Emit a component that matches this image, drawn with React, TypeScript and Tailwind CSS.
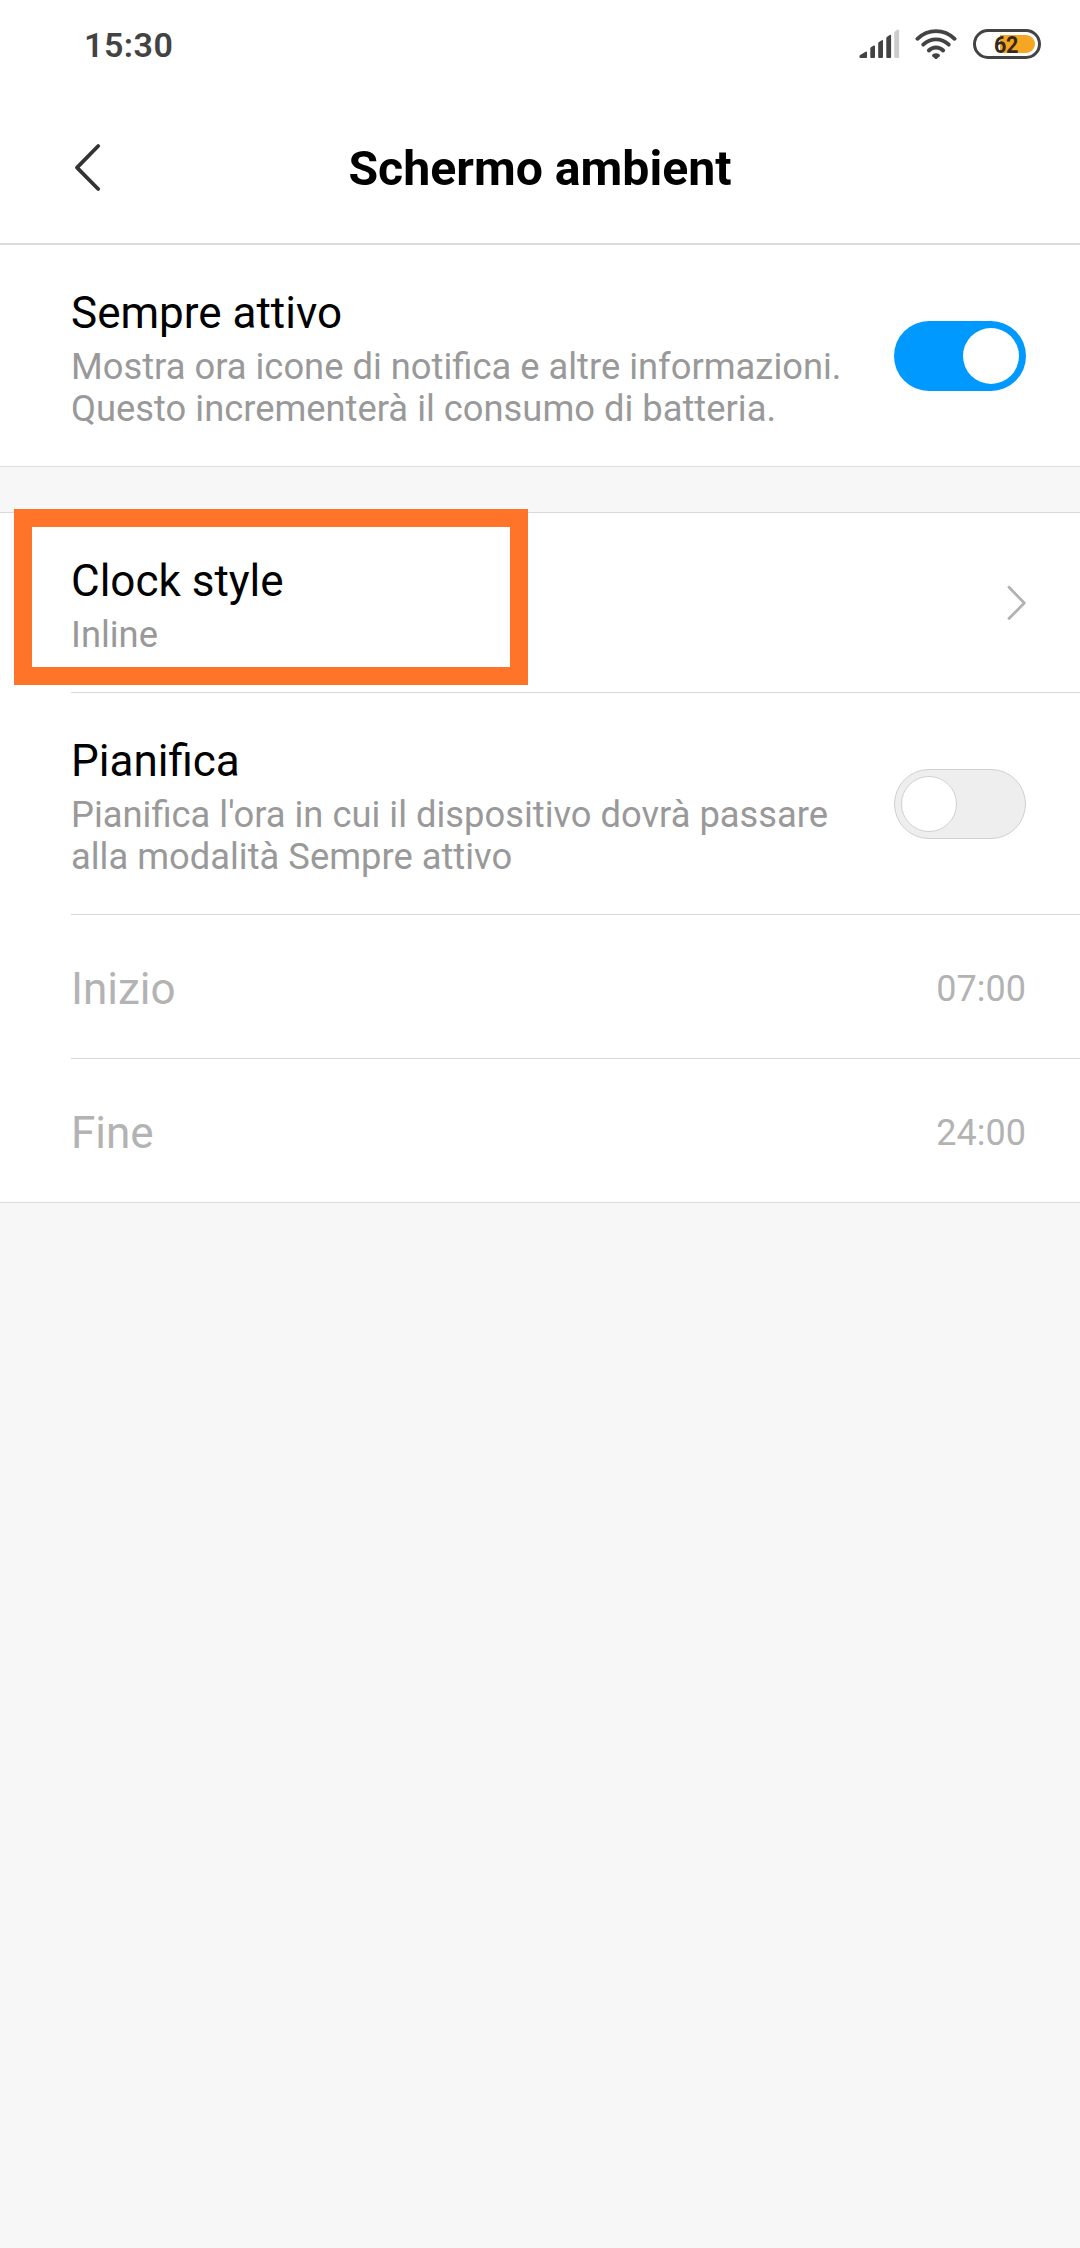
import type { ReactNode } from "react";

function SignalIcon() {
  return (
    <svg width="42" height="30" viewBox="0 0 42 30" fill="#434343">
      <path d="M0.5 27.2Q0.5 26.4 1.2 26L6.6 22.7Q8 22 8 23.5V28.2Q8 29 7 29H1.4Q0.5 29 0.5 28.2Z" />
      <path d="M11.3 19.5Q11.3 18.5 12.2 18L14.8 16.6Q16 16.2 16 17.4V28Q16 29 15 29H12.3Q11.3 29 11.3 28Z" />
      <path d="M19.2 14.4Q19.2 13.5 20 13L22.7 11.2Q24 10.6 24 12V28Q24 29 23 29H20.2Q19.2 29 19.2 28Z" />
      <path d="M27.3 9.3Q27.3 8.3 28.1 7.8L30.8 5.9Q32.1 5.2 32.1 6.6V28Q32.1 29 31.1 29H28.3Q27.3 29 27.3 28Z" />
      <path fill="#cccccc" d="M35.2 4Q35.2 3 36 2.5L38.8 0.6Q40.1 0 40.1 1.3V28Q40.1 29 39.1 29H36.2Q35.2 29 35.2 28Z" />
    </svg>
  );
}

function WifiIcon() {
  return (
    <svg width="42" height="31" viewBox="0 0 42 31" fill="none" stroke="#434343" strokeWidth="3.8" strokeLinecap="round">
      <path d="M2.4 9.8C13 -0.5 29 -0.5 39.6 9.8" />
      <path d="M8.2 15.7C15.5 8.7 26.5 8.7 33.8 15.7" />
      <path d="M13.8 21.5C18 17.5 24 17.5 28.2 21.5" />
      <path d="M17.4 25.6Q21 22.8 24.6 25.6Q25.4 26.4 24.6 27.2L22.3 29.4Q21 30.6 19.7 29.4L17.4 27.2Q16.6 26.4 17.4 25.6Z" fill="#434343" stroke="none" />
    </svg>
  );
}

function Battery() {
  return (
    <div className="relative h-[30px] w-[68px] rounded-full border-3 border-[#434343] bg-white">
      <div className="absolute top-[3px] right-[3px] h-[18px] w-[35px] rounded-r-full bg-[#f5a623]" />
      <span className="absolute top-px left-[18px] origin-left scale-x-[0.9] text-[24px] leading-[24px] font-bold tracking-[-0.3px] text-[#35291a]">
        62
      </span>
    </div>
  );
}

function Switch({ on }: { on: boolean }) {
  return on ? (
    <div className="flex h-[70px] w-[132px] shrink-0 items-center justify-end rounded-full bg-[#0099ff] pr-[7px]">
      <div className="size-[56px] rounded-full bg-white" />
    </div>
  ) : (
    <div className="flex h-[70px] w-[132px] shrink-0 items-center rounded-full border border-[#d0d0d0] bg-[#eeeeee] pl-[6px]">
      <div className="size-[56px] rounded-full border border-[#d0d0d0] bg-white" />
    </div>
  );
}

function Labels({ title, lines }: { title: string; lines: string[] }) {
  return (
    <div className="whitespace-nowrap">
      <div className="text-[44px] leading-[52px] text-black">{title}</div>
      <div className="mt-[7px] text-[36.35px] leading-[42px] text-[#999999]">
        {lines.map((line) => (
          <div key={line}>{line}</div>
        ))}
      </div>
    </div>
  );
}

function SettingRow({ children }: { children: ReactNode }) {
  return <div className="flex h-[221px] items-start justify-between pt-[42px] pr-[54px] pl-[71px]">{children}</div>;
}

function Divider() {
  return <div className="ml-[71px] h-px bg-[#d9d9d9]" />;
}

function TimeRow({ label, value }: { label: string; value: string }) {
  return (
    <div className="flex h-[143px] items-center justify-between pt-[4px] pr-[54px] pl-[71px] text-[#b3b3b3]">
      <span className="text-[44px] leading-[52px]">{label}</span>
      <span className="text-[36px] leading-[42px]">{value}</span>
    </div>
  );
}

export default function App() {
  return (
    <div className="h-[2248px] w-[1080px] overflow-hidden bg-[#f7f7f7] font-['Roboto',sans-serif]">
      <header className="h-[245px] border-b-2 border-[#dcdcdc] bg-white">
        <div className="flex h-[88px] items-start justify-between pt-[25px] pr-[39px] pl-[84px]">
          <span className="text-[34px] leading-[40px] font-semibold tracking-[0.5px] text-[#434343]">15:30</span>
          <div className="flex items-start pt-[4px]">
            <SignalIcon />
            <div className="ml-[14px]">
              <WifiIcon />
            </div>
            <div className="ml-[16px]">
              <Battery />
            </div>
          </div>
        </div>
        <div className="grid h-[155px] grid-cols-[120px_1fr_120px] items-start">
          <svg className="mt-[55px] ml-[73px]" width="29" height="50" viewBox="0 0 29 50" fill="none" stroke="#333333" strokeWidth="3.8" strokeLinecap="round" strokeLinejoin="round">
            <path d="M25.2 3L4 24.6L25.2 46" />
          </svg>
          <h1 className="mt-[53px] text-center text-[48.2px] leading-[56px] font-bold text-black">Schermo ambient</h1>
        </div>
      </header>

      <section className="border-b border-[#dfdfdf] bg-white">
        <SettingRow>
          <Labels
            title="Sempre attivo"
            lines={["Mostra ora icone di notifica e altre informazioni.", "Questo incrementerà il consumo di batteria."]}
          />
          <div className="mt-[34px]">
            <Switch on />
          </div>
        </SettingRow>
      </section>

      <section className="mt-[45px] border-y border-[#dadada] bg-white">
        <div className="relative flex h-[179px] items-start justify-between pt-[42px] pr-[54px] pl-[71px]">
          <Labels title="Clock style" lines={["Inline"]} />
          <svg className="mt-[30px]" width="20" height="36" viewBox="0 0 20 36" fill="none" stroke="#b2b2b2" strokeWidth="2.8" strokeLinecap="round" strokeLinejoin="round">
            <path d="M3 2.2L18.3 18L3 33.6" />
          </svg>
          <div className="absolute top-[-4px] left-[14px] h-[176px] w-[514px] border-[18px] border-[#ff7429]" />
        </div>
        <Divider />
        <SettingRow>
          <Labels
            title="Pianifica"
            lines={["Pianifica l'ora in cui il dispositivo dovrà passare", "alla modalità Sempre attivo"]}
          />
          <div className="mt-[34px]">
            <Switch on={false} />
          </div>
        </SettingRow>
        <Divider />
        <TimeRow label="Inizio" value="07:00" />
        <Divider />
        <TimeRow label="Fine" value="24:00" />
      </section>
    </div>
  );
}
